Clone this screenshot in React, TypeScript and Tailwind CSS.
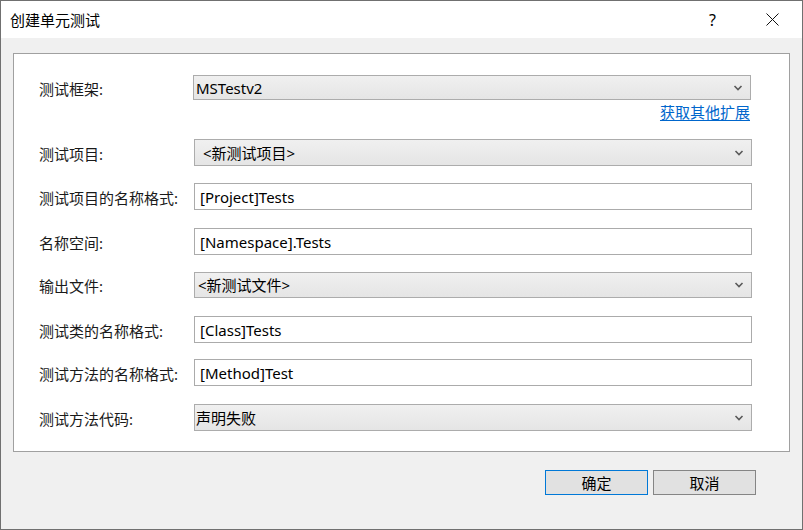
import React from "react";

const font = { fontFamily: '"Segoe UI", "Noto Sans", "Noto Sans CJK SC", sans-serif' };

type Row =
  | { kind: "combo"; label: string; value: string; mt: string; h: string; pl: string }
  | { kind: "text"; label: string; value: string; mt: string; h: string };

const Chevron = () => (
  <svg width="10" height="6" viewBox="0 0 10 6" className="shrink-0">
    <path d="M1.5 1 L5 4.5 L8.5 1" fill="none" stroke="#5a5a5a" strokeWidth="1.6" />
  </svg>
);

const rows: Row[] = [
  { kind: "combo", label: "测试项目:", value: "<新测试项目>", mt: "mt-[18px]", h: "h-[27px]", pl: "pl-[8px]" },
  { kind: "text", label: "测试项目的名称格式:", value: "[Project]Tests", mt: "mt-[17px]", h: "h-[27px]" },
  { kind: "text", label: "名称空间:", value: "[Namespace].Tests", mt: "mt-[18px]", h: "h-[27px]" },
  { kind: "combo", label: "输出文件:", value: "<新测试文件>", mt: "mt-[17px]", h: "h-[26px]", pl: "pl-[3px]" },
  { kind: "text", label: "测试类的名称格式:", value: "[Class]Tests", mt: "mt-[18px]", h: "h-[27px]" },
  { kind: "text", label: "测试方法的名称格式:", value: "[Method]Test", mt: "mt-[16px]", h: "h-[27px]" },
  { kind: "combo", label: "测试方法代码:", value: "声明失败", mt: "mt-[18px]", h: "h-[27px]", pl: "pl-[1px]" },
];

function Label({ text }: { text: string }) {
  return (
    <div className="w-[180px] shrink-0 whitespace-nowrap pl-[25px] pt-[2px] text-[15px] leading-[20px] text-[#1a1a1a]">
      {text}
    </div>
  );
}

function Combo({ value, h, pl }: { value: string; h: string; pl: string }) {
  return (
    <div
      className={`w-[558px] ${h} ${pl} flex items-center justify-between border border-[#acacac] bg-gradient-to-b from-[#f0f0f0] to-[#e5e5e5] pr-[7px] text-[15px] leading-[20px] text-black`}
    >
      <span className="whitespace-nowrap">{value}</span>
      <Chevron />
    </div>
  );
}

function TextBox({ value, h }: { value: string; h: string }) {
  return (
    <div className={`w-[558px] ${h} flex items-center whitespace-nowrap border border-[#ababab] bg-white pl-[5px] text-[15px] leading-[20px] text-black`}>
      {value}
    </div>
  );
}

export default function App() {
  return (
    <div style={font} className="w-[803px] h-[530px] flex flex-col border border-[#707070] bg-[#f0f0f0] overflow-hidden">
      <div className="h-[37px] shrink-0 flex items-center bg-white pl-[9px]">
        <span className="text-[15px] leading-[20px] text-black">创建单元测试</span>
        <span className="ml-auto text-[16px] leading-[20px] text-black">?</span>
        <svg width="13" height="13" viewBox="0 0 13 13" className="ml-[50px] mr-[23px]">
          <path d="M0.5 0.5 L12.5 12.5 M12.5 0.5 L0.5 12.5" stroke="#111" strokeWidth="1" />
        </svg>
      </div>

      <div className="mt-[15px] mx-[12px] h-[399px] shrink-0 flex flex-col border border-[#a0a0a0] bg-white">
        <div className="mt-[21px] flex items-center">
          <Label text="测试框架:" />
          <div className="ml-[-1px] w-[558px] h-[25px] flex items-center justify-between border border-[#acacac] bg-gradient-to-b from-[#f0f0f0] to-[#e5e5e5] pl-[2px] pr-[7px] text-[15px] leading-[20px] text-black">
            <span>MSTestv2</span>
            <Chevron />
          </div>
        </div>
        <div className="mt-[3px] h-[18px] flex justify-end pr-[39px]">
          <a className="text-[15px] leading-[18px] text-[#0066cc] underline underline-offset-2 cursor-pointer">获取其他扩展</a>
        </div>
        {rows.map((r, i) => (
          <div key={i} className={`${r.mt} flex items-center`}>
            <Label text={r.label} />
            {r.kind === "combo" ? <Combo value={r.value} h={r.h} pl={r.pl} /> : <TextBox value={r.value} h={r.h} />}
          </div>
        ))}
      </div>

      <div className="mt-[18px] flex justify-end gap-[5px] pr-[46px]">
        <button className="w-[103px] h-[25px] border border-[#0078d7] bg-[#e1e1e1] text-[15px] leading-[20px] text-black">确定</button>
        <button className="w-[103px] h-[25px] border border-[#858585] bg-[#e1e1e1] text-[15px] leading-[20px] text-black">取消</button>
      </div>
    </div>
  );
}
